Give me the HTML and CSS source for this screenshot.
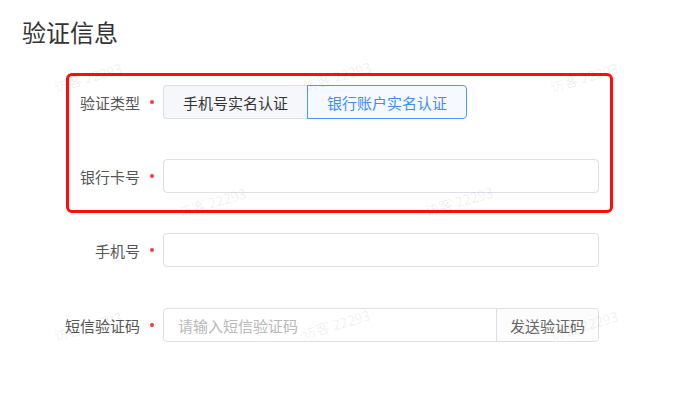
FILE: index.html
```html
<!DOCTYPE html>
<html lang="zh-CN">
<head>
<meta charset="utf-8">
<title>验证信息</title>
<link rel="stylesheet" href="styles.css">
</head>
<body>
<div class="page">
  <h1 class="title">验证信息</h1>
  <form class="form">
    <div class="highlight">
      <div class="row">
        <label class="label"><span>验证类型</span><i class="req"></i></label>
        <div class="radio-group">
          <span class="radio-btn">手机号实名认证</span>
          <span class="radio-btn active">银行账户实名认证</span>
        </div>
      </div>
      <div class="row">
        <label class="label"><span>银行卡号</span><i class="req"></i></label>
        <div class="input"></div>
      </div>
    </div>
    <div class="plain">
      <div class="row">
        <label class="label"><span>手机号</span><i class="req"></i></label>
        <div class="input"></div>
      </div>
      <div class="row">
        <label class="label"><span>短信验证码</span><i class="req"></i></label>
        <div class="input group">
          <span class="placeholder">请输入短信验证码</span>
          <span class="append">发送验证码</span>
        </div>
      </div>
    </div>
  </form>
  <div class="watermarks">
    <span class="wm wm-a">访客 22293</span>
    <span class="wm wm-b">访客 22293</span>
    <span class="wm wm-c">访客 22293</span>
    <span class="wm wm-e">访客 22293</span>
    <span class="wm wm-f">访客 22293</span>
    <span class="wm wm-g">访客 22293</span>
    <span class="wm wm-h">访客 22293</span>
    <span class="wm wm-i">访客 22293</span>
  </div>
</div>
</body>
</html>
```

FILE: styles.css
```css
* { box-sizing: border-box; }
html, body {
  margin: 0;
  padding: 0;
  background: #fff;
}
body {
  font-family: "Noto Sans CJK SC", "Noto Sans", sans-serif;
  color: #333;
}
.page {
  position: relative;
  width: 681px;
  height: 393px;
  overflow: hidden;
}
.title {
  margin: 16px 0 0 22px;
  font-size: 24px;
  line-height: 32px;
  font-weight: 400;
  color: #333;
}
.form {
  margin: 25px 0 0 66px;
  width: 547px;
}
.highlight {
  border: 3px solid #ff0d0d;
  border-radius: 6px;
  padding: 9px 11px 17px 0;
  display: flex;
  flex-direction: column;
  gap: 40px;
}
.plain {
  margin-top: 20px;
  padding: 0 14px 0 3px;
  display: flex;
  flex-direction: column;
  gap: 41px;
}
.row {
  display: flex;
  align-items: center;
  height: 34px;
}
.label {
  width: 94px;
  flex: none;
  display: flex;
  justify-content: flex-end;
  align-items: center;
  padding-right: 9px;
  font-size: 15px;
  color: #555;
  white-space: nowrap;
}
.label span { flex: none; }
.req {
  flex: none;
  width: 4px;
  height: 4px;
  border-radius: 50%;
  background: #f53a3c;
  margin-left: 10px;
}
.radio-group {
  display: flex;
  height: 34px;
}
.radio-btn {
  display: flex;
  align-items: center;
  padding: 0 19px;
  font-size: 15px;
  border: 1px solid #dcdfe6;
  background: #f5f7fa;
  color: #333;
}
.radio-btn:first-child {
  border-radius: 4px 0 0 4px;
  border-right: none;
}
.radio-btn.active {
  border-color: #4c96ff;
  color: #3f8cf5;
  background: #f6f9ff;
  border-radius: 0 4px 4px 0;
}
.input {
  flex: 1;
  height: 34px;
  border: 1px solid #dcdfe6;
  border-radius: 4px;
  background: #fff;
}
.group {
  display: flex;
  align-items: stretch;
}
.placeholder {
  flex: 1;
  display: flex;
  align-items: center;
  padding-left: 14px;
  font-size: 15px;
  color: #b8b8b8;
}
.append {
  width: 102px;
  display: flex;
  align-items: center;
  justify-content: center;
  border-left: 1px solid #dcdfe6;
  font-size: 15px;
  color: #666;
  background: #fcfcfc;
  border-radius: 0 4px 4px 0;
}
.watermarks {
  position: absolute;
  inset: 0;
  pointer-events: none;
}
.wm {
  position: absolute;
  width: 90px;
  margin-left: -45px;
  text-align: center;
  font-size: 14px;
  line-height: 18px;
  margin-top: -9px;
  color: rgba(0, 0, 0, 0.07);
  transform: rotate(-16deg);
  white-space: nowrap;
}
.wm-a { left: 88px; top: 77px; }
.wm-b { left: 337px; top: 76px; }
.wm-c { left: 584px; top: 77px; }
.wm-e { left: 212px; top: 202px; }
.wm-f { left: 459px; top: 201px; }
.wm-g { left: 88px; top: 326px; }
.wm-h { left: 336px; top: 324px; }
.wm-i { left: 584px; top: 325px; }
```
